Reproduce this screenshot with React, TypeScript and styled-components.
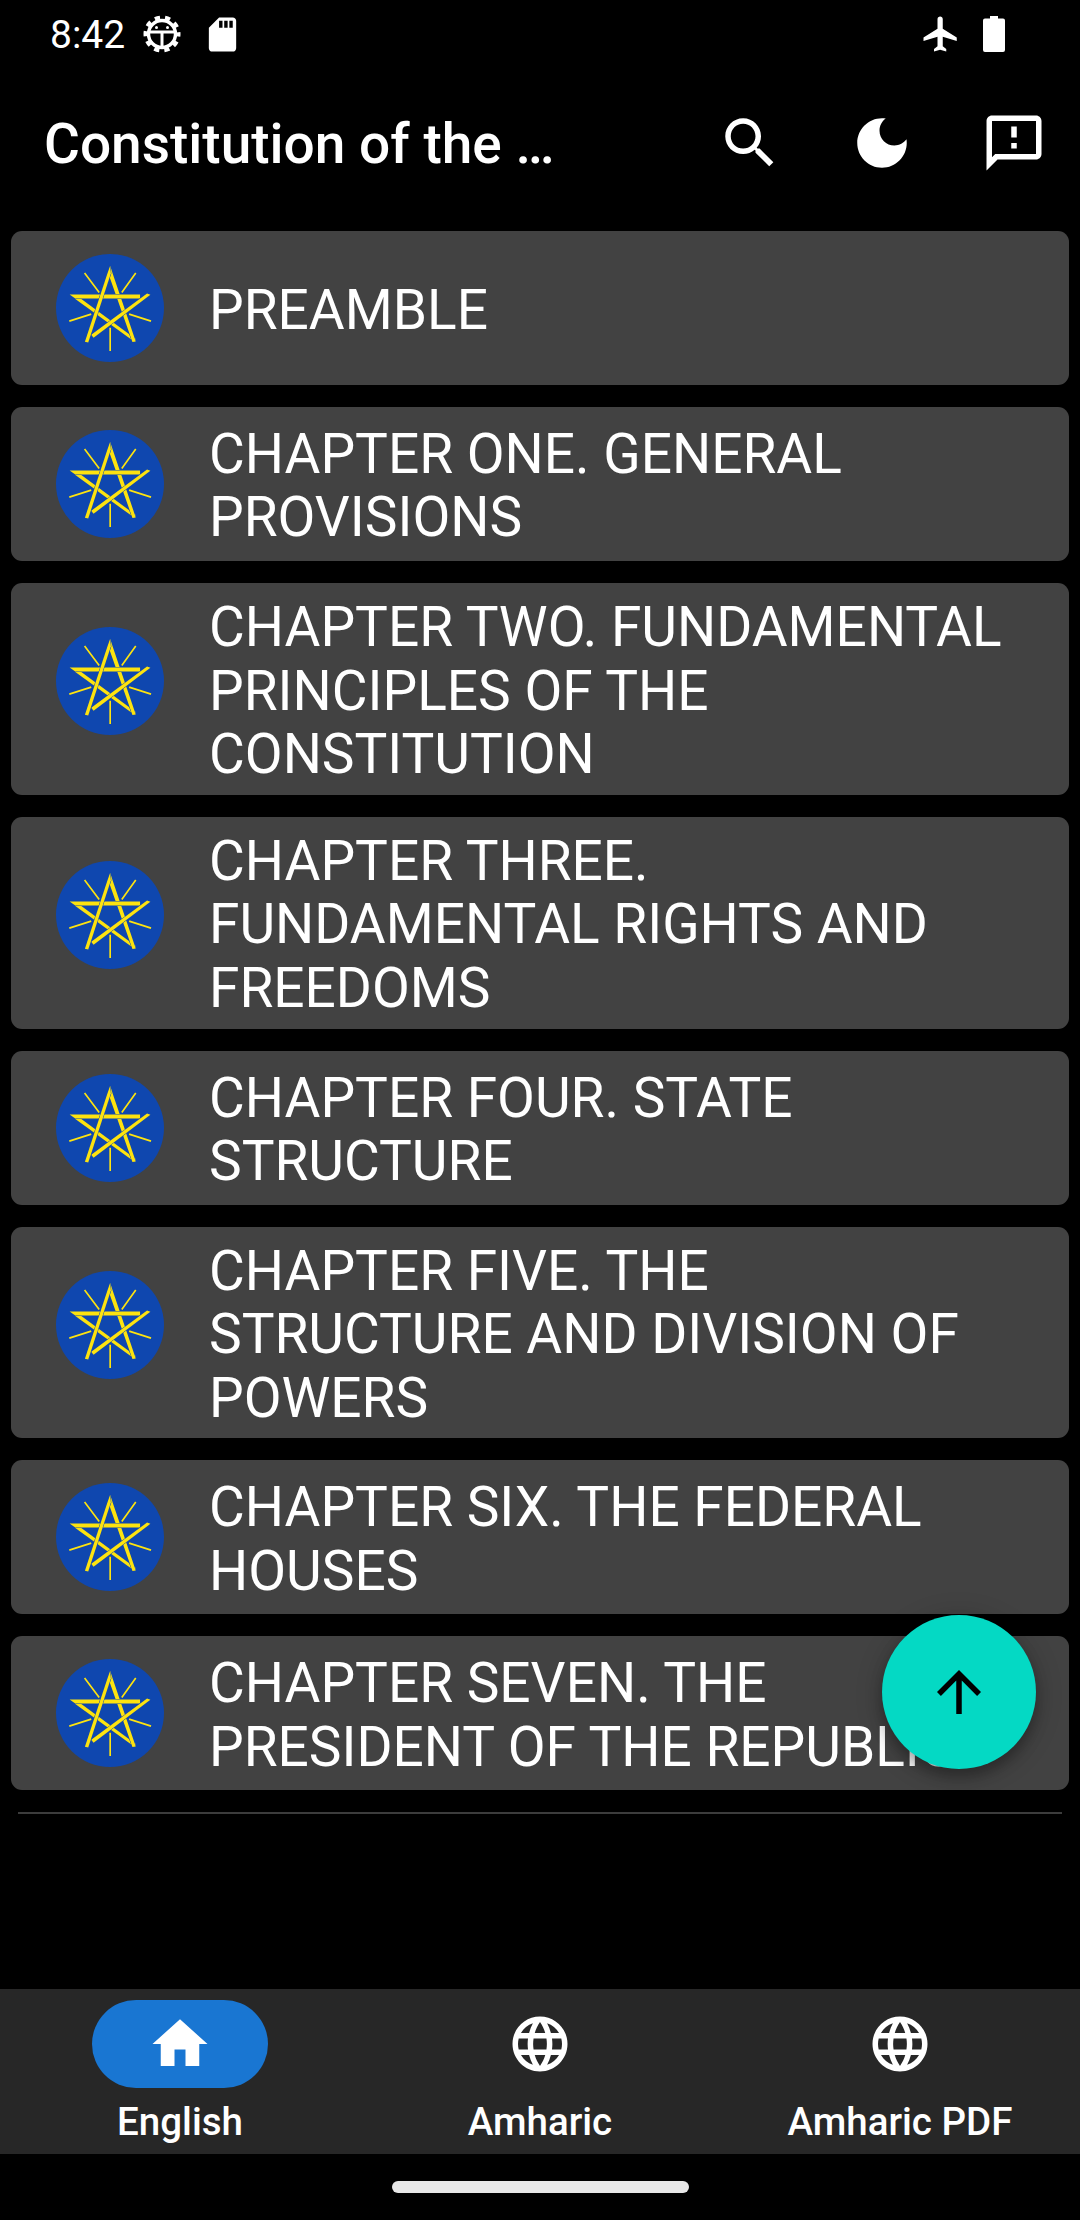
import React from "react";
import styled, { createGlobalStyle } from "styled-components";

const Global = createGlobalStyle`
  html, body { margin: 0; padding: 0; background: #000; }
  * { box-sizing: border-box; }
`;

const Screen = styled.div`
  position: relative;
  width: 1080px;
  height: 2220px;
  overflow: hidden;
  background: #000;
  color: #fff;
  font-family: Roboto, "Liberation Sans", sans-serif;
  display: flex;
  flex-direction: column;
`;

const StatusBar = styled.div`
  height: 66px;
  flex: none;
  display: flex;
  align-items: center;
  justify-content: space-between;
  padding: 2px 75px 0 50px;
`;
const StatusGroup = styled.div<{ $gap: number }>`
  display: flex;
  align-items: center;
  gap: ${(p) => p.$gap}px;
`;
const SdSlot = styled.span`
  display: flex;
  margin-left: 3px;
`;
const Clock = styled.span`
  font-size: 39px;
  line-height: 64px;
  padding-top: 1px;
  color: #fff;
`;

const AppBar = styled.header`
  height: 154px;
  flex: none;
  display: flex;
  align-items: center;
  padding-left: 44px;
`;
const Title = styled.h1`
  margin: 0;
  padding-top: 2px;
  flex: 1;
  font-size: 55px;
  font-weight: 500;
  line-height: 66px;
  white-space: nowrap;
`;
const ActionButton = styled.div`
  width: 132px;
  height: 132px;
  flex: none;
  display: flex;
  align-items: center;
  justify-content: center;
`;

const List = styled.main`
  flex: 1;
  display: flex;
  flex-direction: column;
  gap: 22px;
  padding: 11px 11px 0;
`;
const Card = styled.div`
  min-height: 154px;
  background: #424242;
  border-radius: 11px;
  display: flex;
  align-items: center;
  padding: 10.8px 56px 10.8px 45px;
  gap: 45px;
`;
const CardTitle = styled.div`
  flex: 1;
  font-size: 55px;
  line-height: 63.4px;
  padding-top: 2.4px;
  margin-bottom: -2.4px;
  color: #fff;
`;
const Divider = styled.div`
  height: 1.5px;
  background: #3c3c3c;
  margin: 0 7px;
`;

const Fab = styled.div`
  position: absolute;
  left: 882px;
  top: 1615px;
  width: 154px;
  height: 154px;
  border-radius: 50%;
  background: #04d9c4;
  display: flex;
  align-items: center;
  justify-content: center;
  box-shadow: 0 8px 14px rgba(0, 0, 0, 0.28), 0 3px 28px rgba(0, 0, 0, 0.18);
`;

const BottomNav = styled.nav`
  height: 165px;
  flex: none;
  background: #272727;
  display: grid;
  grid-template-columns: repeat(3, 360px);
`;
const NavItem = styled.div`
  display: flex;
  flex-direction: column;
  align-items: center;
  padding-top: 11px;
`;
const NavIconWrap = styled.div<{ $active?: boolean }>`
  width: 176px;
  height: 88px;
  border-radius: 44px;
  background: ${(p) => (p.$active ? "#1976d2" : "transparent")};
  display: flex;
  align-items: center;
  justify-content: center;
`;
const NavLabel = styled.div`
  margin-top: 10px;
  font-size: 38.5px;
  font-weight: 500;
  line-height: 48px;
  white-space: nowrap;
`;

const GestureArea = styled.div`
  height: 66px;
  flex: none;
  display: flex;
  justify-content: center;
  padding-top: 27px;
`;
const HomeBar = styled.div`
  width: 297px;
  height: 12px;
  border-radius: 6px;
  background: #e8e8e8;
`;

const EmblemSvg = styled.svg<{ $raised: boolean }>`
  flex: none;
  margin-bottom: ${(p) => (p.$raised ? "15px" : "0")};
`;

const MIcon = ({ d, size = 66, color = "#fff" }: { d: string; size?: number; color?: string }) => (
  <svg width={size} height={size} viewBox="0 0 24 24" fill={color}>
    <path d={d} />
  </svg>
);

const P = {
  search:
    "M15.5 14h-.79l-.28-.27C15.41 12.59 16 11.11 16 9.5 16 5.91 13.09 3 9.5 3S3 5.91 3 9.5 5.91 16 9.5 16c1.61 0 3.09-.59 4.23-1.57l.27.28v.79l5 4.99L20.49 19l-4.99-5zm-6 0C7.01 14 5 11.99 5 9.5S7.01 5 9.5 5 14 7.01 14 9.5 11.99 14 9.5 14z",
  moon:
    "M12 3c-4.97 0-9 4.03-9 9s4.03 9 9 9 9-4.03 9-9c0-.46-.04-.92-.1-1.36-.98 1.37-2.58 2.26-4.4 2.26-2.98 0-5.4-2.42-5.4-5.4 0-1.81.89-3.42 2.26-4.4-.44-.06-.9-.1-1.36-.1z",
  feedback:
    "M20 2H4c-1.1 0-1.99.9-1.99 2L2 22l4-4h14c1.1 0 2-.9 2-2V4c0-1.1-.9-2-2-2zm0 14H5.17L4 17.17V4h16v12zM11 12h2v2h-2zm0-6h2v4h-2z",
  home: "M10 20v-6h4v6h5v-8h3L12 3 2 12h3v8z",
  globe:
    "M11.99 2C6.47 2 2 6.48 2 12s4.47 10 9.99 10C17.52 22 22 17.52 22 12S17.52 2 11.99 2zm6.93 6h-2.95c-.32-1.25-.78-2.45-1.38-3.56 1.84.63 3.37 1.91 4.33 3.56zM12 4.04c.83 1.2 1.48 2.53 1.91 3.96h-3.82c.43-1.43 1.08-2.76 1.91-3.96zM4.26 14C4.1 13.36 4 12.69 4 12s.1-1.36.26-2h3.38c-.08.66-.14 1.32-.14 2s.06 1.34.14 2H4.26zm.82 2h2.95c.32 1.25.78 2.45 1.38 3.56-1.84-.63-3.37-1.9-4.33-3.56zm2.95-8H5.08c.96-1.66 2.49-2.93 4.33-3.56C8.81 5.55 8.35 6.75 8.03 8zM12 19.96c-.83-1.2-1.48-2.53-1.91-3.96h3.82c-.43 1.43-1.08 2.76-1.91 3.96zM14.34 14H9.66c-.09-.66-.16-1.32-.16-2s.07-1.35.16-2h4.68c.09.65.16 1.32.16 2s-.07 1.34-.16 2zm.25 5.56c.6-1.11 1.06-2.31 1.38-3.56h2.95c-.96 1.65-2.49 2.93-4.33 3.56zM16.36 14c.08-.66.14-1.32.14-2s-.06-1.34-.14-2h3.38c.16.64.26 1.31.26 2s-.1 1.36-.26 2h-3.38z",
  arrowUp: "M4 12l1.41 1.41L11 7.83V20h2V7.83l5.58 5.59L20 12l-8-8-8 8z",
  sd: "M18 2h-8L4.02 8 4 20c0 1.1.9 2 2 2h12c1.1 0 2-.9 2-2V4c0-1.1-.9-2-2-2zm-6 6h-2V4h2v4zm3 0h-2V4h2v4zm3 0h-2V4h2v4z",
  plane:
    "M21 16v-2l-8-5V3.5c0-.83-.67-1.5-1.5-1.5S10 2.67 10 3.5V9l-8 5v2l8-2.5V19l-2 1.5V22l3.5-1 3.5 1v-1.5L13 19v-5.5l8 2.5z",
};

const GearBug = () => (
  <svg width="40" height="40" viewBox="0 0 40 40" fill="none" stroke="#fff">
    <circle cx="20" cy="20" r="13.5" strokeWidth="3.4" />
    <circle cx="20" cy="20" r="16.5" strokeWidth="4" strokeDasharray="5.2 5.17" strokeDashoffset="2.6" />
    <path d="M7 18h26M20 18v15" strokeWidth="3" />
    <circle cx="14.5" cy="13.5" r="1.5" fill="#fff" stroke="none" />
    <circle cx="25.5" cy="13.5" r="1.5" fill="#fff" stroke="none" />
  </svg>
);

const Battery = () => (
  <svg width="22" height="36" viewBox="0 0 22 36" fill="#fff">
    <path d="M7 0h8v2.5h5a2 2 0 0 1 2 2V34a2 2 0 0 1-2 2H2a2 2 0 0 1-2-2V4.500a2 2 0 0 1 2-2h5z" />
  </svg>
);

const Emblem = ({ raised }: { raised: boolean }) => (
  <EmblemSvg $raised={raised} width="108" height="108" viewBox="77 71 325 325">
    <circle cx="239.500" cy="233.500" r="162.500" fill="#0f47af" />
    <g fill="#fde30f" stroke="#0f47af" strokeWidth="3" paintOrder="stroke">
      <polygon points="134,206 142,198 317,327 314,336" />
      <polygon points="240,106 249,134 317,334 307,336 234,128" />
      <polygon points="118,193 330,193 330,205 135,205" />
      <polygon points="361,194 351,190 183,314 190,323" />
      <polygon points="240,106 231,132 164,335 174,337 242,130" />
    </g>
    <g stroke="#fde30f" strokeWidth="5" fill="none">
      <path d="M163 128L207 187M317 128L275 187M117 273L183 252M363 273L297 252M240 363V293" />
    </g>
  </EmblemSvg>
);

const chapters = [
  { title: "PREAMBLE", tall: false },
  { title: "CHAPTER ONE. GENERAL PROVISIONS", tall: false },
  { title: "CHAPTER TWO. FUNDAMENTAL PRINCIPLES OF THE CONSTITUTION", tall: true },
  { title: "CHAPTER THREE. FUNDAMENTAL RIGHTS AND FREEDOMS", tall: true },
  { title: "CHAPTER FOUR. STATE STRUCTURE", tall: false },
  { title: "CHAPTER FIVE. THE STRUCTURE AND DIVISION OF POWERS", tall: true },
  { title: "CHAPTER SIX. THE FEDERAL HOUSES", tall: false },
  { title: "CHAPTER SEVEN. THE PRESIDENT OF THE REPUBLIC", tall: false },
];

const tabs = [
  { label: "English", icon: P.home, active: true },
  { label: "Amharic", icon: P.globe, active: false },
  { label: "Amharic PDF", icon: P.globe, active: false },
];

export default function App() {
  return (
    <Screen>
      <Global />
      <StatusBar>
        <StatusGroup $gap={17}>
          <Clock>8:42</Clock>
          <GearBug />
          <SdSlot><MIcon d={P.sd} size={41} /></SdSlot>
        </StatusGroup>
        <StatusGroup $gap={21}>
          <MIcon d={P.plane} size={42} />
          <Battery />
        </StatusGroup>
      </StatusBar>
      <AppBar>
        <Title>Constitution of the …</Title>
        <ActionButton><MIcon d={P.search} /></ActionButton>
        <ActionButton><MIcon d={P.moon} /></ActionButton>
        <ActionButton><MIcon d={P.feedback} /></ActionButton>
      </AppBar>
      <List>
        {chapters.map((c) => (
          <Card key={c.title}>
            <Emblem raised={c.tall} />
            <CardTitle>{c.title}</CardTitle>
          </Card>
        ))}
        <Divider />
      </List>
      <Fab><MIcon d={P.arrowUp} color="#000" /></Fab>
      <BottomNav>
        {tabs.map((t) => (
          <NavItem key={t.label}>
            <NavIconWrap $active={t.active}><MIcon d={t.icon} /></NavIconWrap>
            <NavLabel>{t.label}</NavLabel>
          </NavItem>
        ))}
      </BottomNav>
      <GestureArea><HomeBar /></GestureArea>
    </Screen>
  );
}
